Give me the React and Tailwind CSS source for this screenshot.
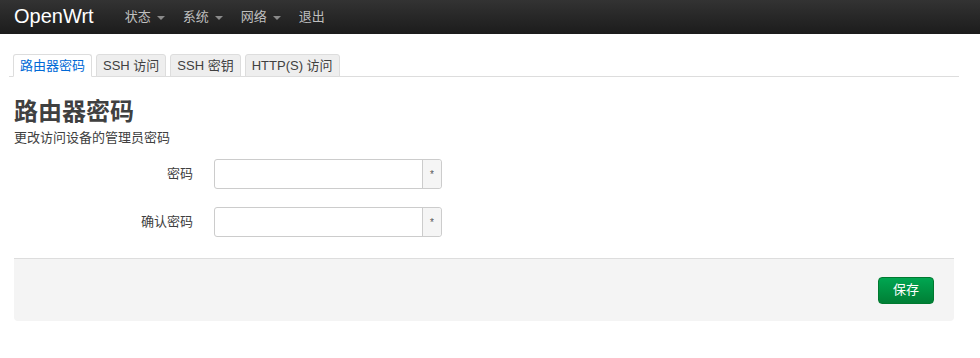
const FONT = '"Liberation Sans", "Noto Sans CJK SC", Arial, sans-serif'

const MENU = [
  { label: '状态', caret: true },
  { label: '系统', caret: true },
  { label: '网络', caret: true },
  { label: '退出' },
]

const TABS = ['路由器密码', 'SSH 访问', 'SSH 密钥', 'HTTP(S) 访问']

function Caret() {
  return (
    <span className="ml-[6px] inline-block w-0 h-0 border-l-[4px] border-r-[4px] border-t-[4px] border-l-transparent border-r-transparent border-t-[#8a8a8a] mt-[2px]" />
  )
}

function Field({ label }) {
  return (
    <div className="flex items-center">
      <label className="w-[179px] text-right text-[13px] text-[#404040] pr-0">{label}</label>
      <div className="ml-[21px] flex h-[30px] w-[228px] rounded-[3px] border border-[#ccc] bg-white">
        <input type="password" className="flex-1 min-w-0 outline-none bg-transparent px-2" />
        <span className="w-[19px] flex items-center justify-center border-l border-[#ccc] bg-[#f5f5f5] rounded-r-[3px] text-[10px] text-[#555]">
          *
        </span>
      </div>
    </div>
  )
}

export default function App() {
  return (
    <div className="min-h-[358px] bg-white text-[#404040]" style={{ fontFamily: FONT }}>
      <header className="h-[34px] bg-gradient-to-b from-[#333] to-[#1c1c1c] flex items-center pl-[14px]">
        <span className="text-white text-[20px] leading-none -mt-[2px]">OpenWrt</span>
        <nav className="ml-[31px] flex gap-[18px]">
          {MENU.map((m) => (
            <span key={m.label} className="flex items-center text-[13px] text-[#bfbfbf]">
              {m.label}
              {m.caret && <Caret />}
            </span>
          ))}
        </nav>
      </header>

      <main className="w-[940px] ml-[14px]">
        <ul className="mt-[20px] -mx-[5px] px-[4px] flex gap-[4px] border-b border-[#ddd]">
          {TABS.map((t, i) => (
            <li
              key={t}
              className={
                i === 0
                  ? 'h-[23px] -mb-px px-[6px] flex items-center text-[13px] text-[#0069d6] bg-white border border-[#ddd] border-b-white rounded-t-[3px]'
                  : 'h-[23px] -mb-px px-[6px] flex items-center text-[13px] text-[#404040] bg-[#eee] border border-[#ddd] rounded-t-[3px]'
              }
            >
              {t}
            </li>
          ))}
        </ul>

        <h2 className="mt-[20px] text-[24px] leading-[30px] font-bold text-[#404040]">路由器密码</h2>
        <p className="mt-[2px] text-[13px] leading-[18px]">更改访问设备的管理员密码</p>

        <div className="mt-[12px] flex flex-col gap-[18px]">
          <Field label="密码" />
          <Field label="确认密码" />
        </div>

        <div className="mt-[21px] h-[63px] border-t border-[#ddd] bg-[#f4f4f4] rounded-b-[4px] flex items-center justify-end pr-[20px]">
          <button className="h-[27px] w-[56px] rounded-[4px] border border-[#00792f] bg-gradient-to-b from-[#00a651] to-[#007f35] text-white text-[13px]">
            保存
          </button>
        </div>
      </main>
    </div>
  )
}
